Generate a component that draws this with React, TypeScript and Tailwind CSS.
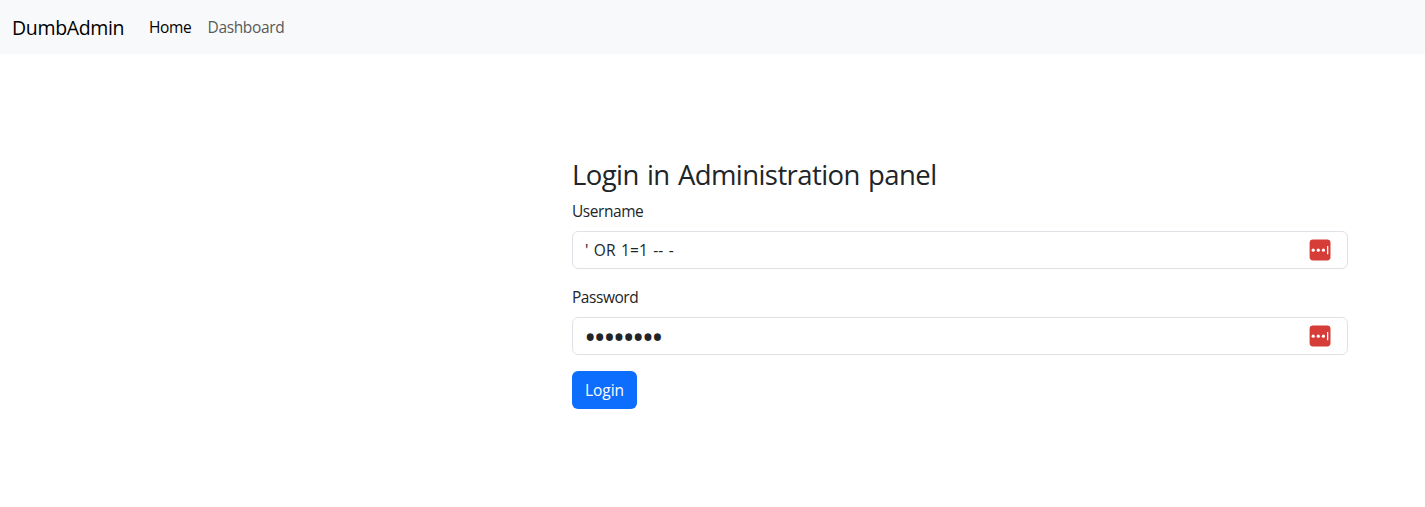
function KeyIcon() {
  return (
    <svg width="22" height="22" viewBox="0 0 22 22" aria-hidden="true" className="shrink-0">
      <rect x="0.6" y="0.6" width="20.9" height="20.9" rx="3.4" fill="#d63d39" />
      <circle cx="4.2" cy="11.2" r="1.6" fill="#fff" />
      <circle cx="9.3" cy="11.2" r="1.6" fill="#fff" />
      <circle cx="14.4" cy="11.2" r="1.6" fill="#fff" />
      <rect x="18" y="7" width="1.3" height="8.3" rx="0.3" fill="#fff" />
    </svg>
  );
}

type FieldProps = { label: string; type: string; value: string; inputClass: string; labelClass: string };

function Field({ label, type, value, inputClass, labelClass }: FieldProps) {
  return (
    <label className="mb-4 block">
      <span className={`mb-2 block h-6 leading-6 ${labelClass}`}>{label}</span>
      <span className="flex h-[38px] items-center rounded-md border border-[#dee2e6] bg-white pr-4 pl-3">
        <input type={type} defaultValue={value} className={`min-w-0 flex-1 bg-transparent outline-none ${inputClass}`} />
        <KeyIcon />
      </span>
    </label>
  );
}

export default function App() {
  return (
    <div className="h-[507px] overflow-hidden bg-white font-['Open_Sans','Noto_Sans',sans-serif] text-[15.5px] text-[#212529]">
      <nav className="flex h-[54px] items-center bg-[#f8f9fa] pl-3">
        <a className="mr-6 w-[113px] pt-px text-[19.5px] leading-[30px] tracking-[-0.34px] whitespace-nowrap text-black">DumbAdmin</a>
        <a className="w-[58.5px] leading-6 tracking-[-0.35px] whitespace-nowrap text-black">Home</a>
        <a className="leading-6 tracking-[-0.36px] whitespace-nowrap text-[#595a5b]">Dashboard</a>
      </nav>
      <main className="ml-[572px] w-[776px] pt-[103px]">
        <h3 className="mb-2 h-[34px] pt-px text-[27.5px] leading-[34px] font-normal tracking-[-0.58px] [word-spacing:1.7px] whitespace-nowrap">Login in Administration panel</h3>
        <Field label="Username" type="text" value="' OR 1=1 -- -" labelClass="tracking-[-0.45px]" inputClass="h-6 tracking-[0.1px] [word-spacing:1.2px]" />
        <Field label="Password" type="password" value="password" labelClass="tracking-[-0.45px]" inputClass="h-9 pt-px text-[33px] tracking-[-2.8px] -ml-px" />
        <button className="block h-[38px] w-[65px] rounded-md bg-[#0d6efd] text-center leading-6 tracking-normal text-white">Login</button>
      </main>
    </div>
  );
}
